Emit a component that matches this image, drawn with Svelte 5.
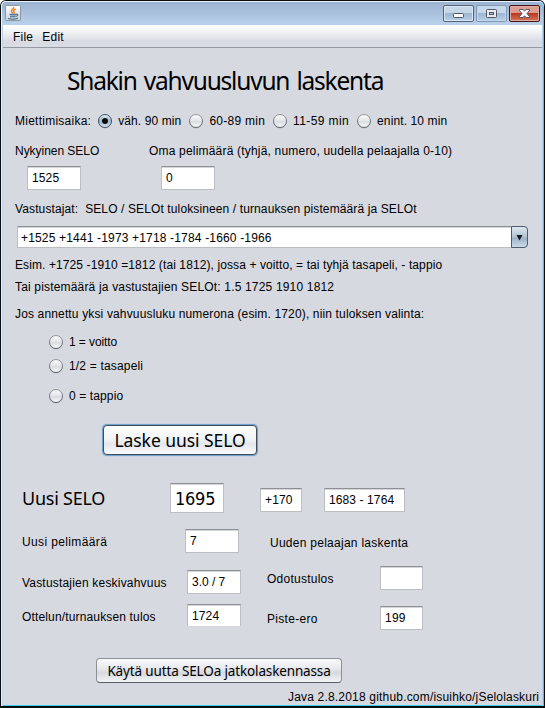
<script>
  // Spreads the letters of a label so that it fills the given width.
  function fit(node, width) {
    const natural = node.getBoundingClientRect().width;
    const count = node.textContent.length;
    if (count > 1) node.style.letterSpacing = `${(width - 0.8 - natural) / count}px`;
  }

  const times = [
    { label: 'väh. 90 min', w: 64, on: true },
    { label: '60-89 min', w: 56.5 },
    { label: '11-59 min', w: 56.8 },
    { label: 'enint. 10 min', w: 71 },
  ];
  const results = [
    { label: '1 = voitto', w: 49 },
    { label: '1/2 = tasapeli', w: 75 },
    { label: '0 = tappio', w: 55 },
  ];
</script>

{#snippet text(value, width, cls = '')}<span class="t {cls}" use:fit={width}>{value}</span>{/snippet}

{#snippet radio(on)}
  <svg class="radio" width="16" height="16" viewBox="0 0 16 16">
    <defs>
      <linearGradient id="rOff" x1="0" y1="0" x2="0" y2="1"><stop offset="0" stop-color="#fdfdfe" /><stop offset=".5" stop-color="#e2e4e8" /><stop offset=".55" stop-color="#d9dce1" /><stop offset="1" stop-color="#fafbfc" /></linearGradient>
      <linearGradient id="rOn" x1="0" y1="0" x2="0" y2="1"><stop offset="0" stop-color="#e8eff7" /><stop offset=".5" stop-color="#9fb6cc" /><stop offset="1" stop-color="#dbe8f4" /></linearGradient>
      <linearGradient id="rEdge" x1="0" y1="0" x2="0" y2="1"><stop offset="0" stop-color="#93979d" /><stop offset="1" stop-color="#5d636b" /></linearGradient>
    </defs>
    <circle cx="8" cy="8.6" r="6.8" fill="#b5bac3" />
    <circle cx="8" cy="8" r="6.5" fill={on ? 'url(#rOn)' : 'url(#rOff)'} stroke={on ? '#3f5366' : 'url(#rEdge)'} stroke-width="1" />
    {#if on}<circle cx="8" cy="8" r="3" fill="#0b0d10" />{/if}
  </svg>
{/snippet}

<div class="window">
  <header>
    <svg class="java" width="16" height="16" viewBox="0 0 16 16">
      <defs><linearGradient id="jv" x1="0" y1="0" x2="0" y2="1"><stop offset="0" stop-color="#fff" /><stop offset="1" stop-color="#c9d3dc" /></linearGradient></defs>
      <rect x=".5" y=".5" width="15" height="15" rx="1" fill="url(#jv)" stroke="#8b96a1" />
      <path d="M8.6 2C9.5 3.5 6 4.500 6.500 6.300C6.700 7.200 7.600 7.600 7.800 8.500M10.700 4C8.500 5 8.200 5.800 9 6.700C9.500 7.300 9.100 8 8.600 8.500" fill="none" stroke="#ee8324" stroke-width="1.5" />
      <path d="M4.500 9.500H11M5 11.500H10.500M3 13.400C6 14.300 10 14.300 13 13.200M11 9.300C13.500 8.700 13.300 11 10.800 11.400" fill="none" stroke="#587b98" stroke-width="1.300" />
    </svg>
    <div class="controls">
      <span class="ctl"><svg width="29" height="15" viewBox="0 0 29 15"><rect x="9.500" y="7.500" width="10" height="4" rx=".8" fill="#fff" stroke="#535666" /></svg></span>
      <span class="ctl dim"><svg width="29" height="15" viewBox="0 0 29 15"><rect x="9.500" y="3.500" width="10" height="8" rx=".8" fill="#e6eaf0" stroke="#535666" /><rect x="12.500" y="6.500" width="4" height="2" fill="#a9bdd5" stroke="#535666" /></svg></span>
      <span class="ctl close"><svg width="29" height="15" viewBox="0 0 29 15"><path d="M9.500 3.500H13L14.500 5.200L16 3.500H19.500V4.500L17 7.500L19.500 10.500V11.500H16L14.500 9.800L13 11.500H9.500V10.500L12 7.500L9.500 4.500Z" fill="#fff" stroke="#535666" /></svg></span>
    </div>
  </header>
  <nav>
    {@render text('File', 21)}
    {@render text('Edit', 22.5)}
  </nav>

  <main>
    <h1>{@render text('Shakin vahvuusluvun laskenta', 317)}</h1>

    <div class="row times">
      {@render text('Miettimisaika:', 77, 'lead')}
      {#each times as o}
        <label>{@render radio(o.on)}{@render text(o.label, o.w)}</label>
      {/each}
    </div>

    <div class="row own">
      <div class="cell first">{@render text('Nykyinen SELO', 85)}<div class="field w54">{@render text('1525', 28)}</div></div>
      <div class="cell">{@render text('Oma pelimäärä (tyhjä, numero, uudella pelaajalla 0-10)', 304)}<div class="field w54">{@render text('0', 7)}</div></div>
    </div>

    <div class="row opponents">{@render text('Vastustajat:  SELO / SELOt tuloksineen / turnauksen pistemäärä ja SELOt', 402.5)}</div>
    <div class="combo">
      <div class="value">{@render text('+1525 +1441 -1973 +1718 -1784 -1660 -1966', 251.5)}</div>
      <div class="arrow"><svg width="8" height="8" viewBox="0 0 8 8"><path d="M.5 1H7.500L4 7.500Z" fill="#171a1e" /></svg></div>
    </div>
    <div class="row ex1">{@render text('Esim. +1725 -1910 =1812 (tai 1812), jossa + voitto, = tai tyhjä tasapeli, - tappio', 428)}</div>
    <div class="row ex2">{@render text('Tai pistemäärä ja vastustajien SELOt: 1.5 1725 1910 1812', 320)}</div>
    <div class="row ex3">{@render text('Jos annettu yksi vahvuusluku numerona (esim. 1720), niin tuloksen valinta:', 410)}</div>

    <div class="results">
      {#each results as o}
        <label>{@render radio(false)}{@render text(o.label, o.w)}</label>
      {/each}
    </div>

    <button class="calc">{@render text('Laske uusi SELO', 132)}</button>

    <div class="new">
      <div class="caption">{@render text('Uusi SELO', 84)}</div>
      <div class="field big">{@render text('1695', 41)}</div>
      <div class="field w42">{@render text('+170', 28.5)}</div>
      <div class="field w81">{@render text('1683 - 1764', 66)}</div>
    </div>

    <div class="details">
      <div class="left">
        <div class="line l1">{@render text('Uusi pelimäärä', 86)}<div class="field w54">{@render text('7', 7)}</div></div>
        <div class="line l2">{@render text('Vastustajien keskivahvuus', 145.5)}<div class="field w54">{@render text('3.0 / 7', 34)}</div></div>
        <div class="line l3">{@render text('Ottelun/turnauksen tulos', 134.5)}<div class="field w54 cut">{@render text('1724', 28)}</div></div>
      </div>
      <div class="right">
        <div class="line r1">{@render text('Uuden pelaajan laskenta', 139)}</div>
        <div class="line r2">{@render text('Odotustulos', 67.5)}<div class="field w43"></div></div>
        <div class="line r3">{@render text('Piste-ero', 51.5)}<div class="field w43">{@render text('199', 21.5)}</div></div>
      </div>
    </div>

    <button class="again">{@render text('Käytä uutta SELOa jatkolaskennassa', 224)}</button>
    <footer>{@render text('Java 2.8.2018 github.com/isuihko/jSelolaskuri', 252)}</footer>
  </main>
</div>

<style>
  :global(body) { margin: 0; background: #fff; }
  .window, .window * { box-sizing: border-box; }
  .window {
    width: 545px; height: 708px; overflow: hidden;
    display: flex; flex-direction: column;
    border: 1px solid #0b0c0e; border-bottom-width: 2px; border-radius: 6px 6px 0 0;
    box-shadow: inset 1px 0 #e8f3fc, inset 2px 0 #b9d1ea, inset -1px 0 #35cdee, inset -2px 0 #b9d1ea, inset 0 -1px #35cdee;
    background: #d6d9e0;
    font: 12px/16px "Liberation Sans", Arial, sans-serif; color: #000;
  }
  .t { display: inline-block; white-space: pre; flex: none; }
  header {
    height: 24px; flex: none; display: flex; justify-content: space-between; align-items: flex-start;
    padding: 4px 4px 0 4px; border-radius: 5px 5px 0 0;
    background: linear-gradient(#9ab2cf, #a8c0dc 45%, #b9d1ea);
    box-shadow: inset 0 1px #e9f2fa, inset 1px 0 #e8f3fc, inset -1px 0 #35cdee;
  }
  .java { display: block; }
  .controls { display: flex; gap: 2px; }
  .ctl {
    width: 31px; height: 17px; border: 1px solid #52647c; border-radius: 2px;
    background: linear-gradient(#c6d7e9 0 45%, #9db7d2 50%, #b9d1e8);
    box-shadow: inset 0 0 0 1px #dbe8f4;
  }
  .ctl svg { display: block; }
  .dim { border-color: #8299b5; box-shadow: inset 0 0 0 1px #c4d6e9; }
  .close {
    border-color: #43141c; box-shadow: inset 0 0 0 1px #e3aaa0;
    background: linear-gradient(#dc9c90 0 45%, #b93b23 50%, #d4745b);
  }
  nav {
    height: 23px; flex: none; margin: 0 2px; display: flex; gap: 9px; align-items: center;
    padding: 1px 0 0 10px; border-bottom: 1px solid #969aa4;
    background: linear-gradient(#fff, #f0f1f4 35%, #d8dbe2 75%, #d9dce3);
  }
  main { flex: 1; display: flex; flex-direction: column; padding-left: 14px; }
  h1, button, .caption { font-family: "Noto Sans", "Open Sans", Tahoma, sans-serif; font-weight: 400; }
  h1 { margin: 0 0 0 52px; height: 65px; flex: none; display: flex; align-items: center; font-size: 24.5px; line-height: 30px; word-spacing: 2px; }
  label { display: flex; align-items: center; height: 16px; }
  .radio { display: block; flex: none; margin-right: 5px; }
  .row { flex: none; display: flex; }
  .times { height: 16px; gap: 7px; }
  .times .lead { margin-right: -1px; }
  .own { margin-top: 14px; height: 47px; }
  .own .cell { display: flex; flex-direction: column; align-items: flex-start; }
  .own .first { width: 134px; }
  .cell .field { margin: 7px 0 0 12px; }
  .field {
    flex: none; height: 24px; display: flex; align-items: center; padding: 1px 0 0 5px;
    background: #fff; border: 1px solid #bcbec3; border-top-color: #8d8f94;
    box-shadow: inset 0 1px #d5d6d9;
  }
  .field, .value { line-height: 15px; }
  .field .t { margin-left: -1px; }
  .w54 { width: 54px; } .w43 { width: 43px; } .w42 { width: 42px; } .w81 { width: 81px; }
  .opponents { margin-top: 11px; height: 16px; }
  .combo { flex: none; display: flex; width: 512px; height: 22px; margin: 9px 0 0 1px; }
  .value {
    flex: 1; margin-left: 1px; padding: 2px 0 0 3px; display: flex; align-items: center;
    background: #fff; border: 1px solid #bcbec3; border-top-color: #8d8f94; border-right: 0; box-shadow: inset 0 1px #d5d6d9;
  }
  .arrow {
    width: 17px; display: flex; align-items: center; justify-content: center;
    border: 1px solid #4c5c6c; border-radius: 0 4px 4px 0;
    background: linear-gradient(#dfe7f0, #b3c3d4 48%, #9db1c5 55%, #c9dbec);
  }
  .arrow svg { width: 7px; height: 7px; }
  .ex1 { margin-top: 9px; } .ex2 { margin-top: 6px; } .ex3 { margin-top: 11px; }
  .results { flex: none; margin: 12px 0 0 33px; display: flex; flex-direction: column; gap: 8px; }
  .results label:last-child { margin-top: 6px; }
  button { flex: none; padding: 0; display: flex; align-items: center; justify-content: center; color: #000; }
  .calc {
    width: 154px; height: 30px; margin: 21px 0 0 88px; font-size: 17.5px; line-height: 22px;
    border: 1px solid #3e4b59; border-radius: 4px; box-shadow: 0 0 0 1px #73a4d1, 0 0 1px 1px #73a4d1;
    background: linear-gradient(#fff, #f3f4f7 45%, #e3e6eb 65%, #fafbfd);
  }
  .new { flex: none; margin: 28px 0 0 7px; height: 30px; display: flex; align-items: center; }
  .caption { width: 148px; font-size: 18px; line-height: 22px; }
  .big { font-family: "DejaVu Sans Condensed", "DejaVu Sans", Tahoma, sans-serif; font-stretch: condensed; font-size: 18px; width: 54px; height: 30px; margin-right: 36px; }
  .new .w42 { margin: 4px 22px 0 0; } .new .w81 { margin-top: 4px; }
  .details { flex: none; height: 145px; display: flex; padding-left: 7px; }
  .left { width: 245px; }
  .line { display: flex; align-items: center; }
  .line > .t { margin-right: auto; padding-top: 2px; }
  .left .line { height: 24px; }
  .l1 { width: 217px; margin-top: 16px; }
  .l2 { width: 219px; margin-top: 17px; }
  .l3 { width: 219px; margin-top: 10px; }
  .left .l3 { height: 22px; align-items: flex-start; }
  .l3 > .t { padding-top: 5px; }
  .cut { height: 22px; border-bottom: 0; padding-top: 2px; }
  .right { width: 156px; }
  .r1 { height: 16px; margin: 22px 0 0 3px; }
  .r1 > .t { padding-top: 0; }
  .r2 { height: 24px; margin-top: 15px; }
  .r3 { height: 24px; margin-top: 16px; }
  .again {
    width: 246px; height: 25px; margin-left: 81px; font-size: 13.5px; line-height: 18px;
    border: 1px solid #8d9096; border-bottom-color: #5b5f66; border-radius: 4px;
    background: linear-gradient(#fafafc, #e8eaee 40%, #d6d9df 60%, #f3f4f6);
  }
  footer { margin: 6px 0 0 273px; }
</style>
